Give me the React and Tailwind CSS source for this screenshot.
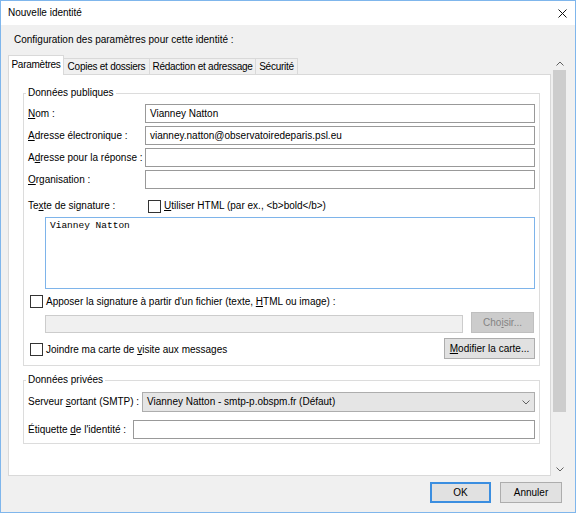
import React from 'react';

function Checkbox() {
  return <div className="w-[13px] h-[13px] border border-[#333333] bg-white shrink-0" />;
}

function Field({ label, value, labelWidth = 'w-[117px]' }) {
  return (
    <div className="flex items-center h-[19px]">
      <div className={`${labelWidth} shrink-0 whitespace-nowrap`}>{label}</div>
      <div className="flex-1 h-[19px] border border-[#999999] bg-white flex items-center pl-[4px] whitespace-nowrap">
        {value}
      </div>
    </div>
  );
}

function Chevron({ up }) {
  return (
    <svg width="8" height="5" viewBox="0 0 8 5">
      <path
        d={up ? 'M0.5 4.5 L4 1 L7.5 4.5' : 'M0.5 0.5 L4 4 L7.5 0.5'}
        fill="none"
        stroke="#606060"
        strokeWidth="1"
      />
    </svg>
  );
}

export default function App() {
  const tabs = [
    { name: 'Copies et dossiers', w: 'w-[86px]' },
    { name: 'Rédaction et adressage', w: 'w-[106px]' },
    { name: 'Sécurité', w: 'w-[42px]' },
  ];

  return (
    <div className="w-[576px] h-[513px] border border-[#7fb6ec] bg-[#f0f0f0] flex flex-col text-[10px] leading-[14px] text-black font-['Liberation_Sans',Arial,sans-serif]">
      {/* title bar */}
      <div className="h-[24px] bg-white flex items-center justify-between pl-[7px] pr-[8px] shrink-0">
        <span>Nouvelle identité</span>
        <svg width="9" height="9" viewBox="0 0 9 9">
          <path d="M0.5 0.5 L8.5 8.5 M8.5 0.5 L0.5 8.5" stroke="#111" strokeWidth="1" />
        </svg>
      </div>

      <div className="pt-[8px] pl-[13px]">Configuration des paramètres pour cette identité :</div>

      <div className="flex items-start mt-[8px] ml-[7px]">
        <div className="w-[543px] flex flex-col">
          {/* tabs */}
          <div className="flex items-end h-[19px] tracking-[-0.25px]">
            <div className="relative z-10 w-[56px] h-[20px] -mb-px bg-white border-t border-l border-r border-[#d9d9d9] flex items-start justify-center pt-[2px] whitespace-nowrap">
              Paramètres
            </div>
            {tabs.map((t) => (
              <div
                key={t.name}
                className={`${t.w} h-[16px] border-t border-r border-[#d9d9d9] bg-[#f0f0f0] flex items-center justify-center whitespace-nowrap`}
              >
                {t.name}
              </div>
            ))}
          </div>

          {/* panel */}
          <div className="h-[402px] bg-white border border-[#d9d9d9] pt-[11px] pl-[14px]">
            <fieldset className="w-[517px] border border-[#dcdcdc] px-[4px] pt-[4px] pb-[6px]">
              <legend className="-ml-[2px] px-[2px] leading-[14px]">Données publiques</legend>
              <div className="flex flex-col gap-[3px]">
                <Field label={<><span className="underline">N</span>om :</>} value="Vianney Natton" />
                <Field
                  label={<><span className="underline">A</span>dresse électronique :</>}
                  value="vianney.natton@observatoiredeparis.psl.eu"
                />
                <Field label={<>A<span className="underline">d</span>resse pour la réponse :</>} value="" />
                <Field label={<><span className="underline">O</span>rganisation :</>} value="" />
              </div>

              <div className="flex items-center h-[14px] mt-[10px]">
                <div className="w-[117px] shrink-0">
                  Te<span className="underline">x</span>te de signature :
                </div>
                <div className="ml-[3px]">
                  <Checkbox />
                </div>
                <span className="ml-[3px] whitespace-nowrap">
                  <span className="underline">U</span>tiliser HTML (par ex., &lt;b&gt;bold&lt;/b&gt;)
                </span>
              </div>

              <div className="ml-[17px] mt-[4px] h-[72px] border border-[#7eb4ea] bg-white pl-[4px] pt-[2px] font-['Liberation_Mono','DejaVu_Sans_Mono',monospace] text-[9.5px] leading-[12px]">
                Vianney Natton
              </div>

              <div className="flex items-center h-[13px] mt-[6px] pl-[2px] gap-[3px]">
                <Checkbox />
                <span className="whitespace-nowrap">
                  Apposer la signature à partir d'un fichier (texte, <span className="underline">H</span>TML ou image) :
                </span>
              </div>

              <div className="flex items-end mt-[4px] ml-[17px] gap-[8px]">
                <div className="w-[418px] h-[18px] border border-[#cccccc] bg-[#f0f0f0]" />
                <div className="w-[63px] h-[21px] border border-[#bfbfbf] bg-[#cccccc] text-[#838383] flex items-center justify-center">
                  Cho<span className="underline">i</span>sir...
                </div>
              </div>

              <div className="flex items-center justify-between h-[21px] mt-[5px]">
                <div className="flex items-center gap-[3px] pl-[2px] mt-[2px]">
                  <Checkbox />
                  <span className="whitespace-nowrap">
                    Joindre ma carte de <span className="underline">v</span>isite aux messages
                  </span>
                </div>
                <div className="w-[91px] h-[21px] border border-[#adadad] bg-[#e1e1e1] flex items-center justify-center whitespace-nowrap">
                  <span className="underline">M</span>odifier la carte...
                </div>
              </div>
            </fieldset>

            <fieldset className="w-[517px] mt-[7px] border border-[#dcdcdc] px-[4px] pt-[5px] pb-[4px]">
              <legend className="-ml-[2px] px-[2px] leading-[14px]">Données privées</legend>
              <div className="flex items-center h-[20px]">
                <div className="w-[114px] shrink-0 whitespace-nowrap">
                  Serveur <span className="underline">s</span>ortant (SMTP) :
                </div>
                <div className="flex-1 h-[20px] border border-[#adadad] bg-[#e5e5e5] flex items-center justify-between pl-[4px] pr-[4px]">
                  <span className="whitespace-nowrap">Vianney Natton - smtp-p.obspm.fr (Défaut)</span>
                  <Chevron />
                </div>
              </div>
              <div className="mt-[8px]">
                <Field
                  labelWidth="w-[105px]"
                  label={<>Étiquette <span className="underline">d</span>e l'identité :</>}
                  value=""
                />
              </div>
            </fieldset>
          </div>
        </div>

        {/* scrollbar */}
        <div className="ml-[2px] mt-[2px] w-[13px] h-[419px] bg-[#f0f0f0] flex flex-col">
          <div className="h-[13px] flex items-center justify-center">
            <Chevron up />
          </div>
          <div className="h-[342px] bg-[#cdcdcd]" />
          <div className="flex-1" />
          <div className="h-[13px] flex items-center justify-center">
            <Chevron />
          </div>
        </div>
      </div>

      {/* buttons */}
      <div className="flex justify-end gap-[9px] mt-[6px] pr-[13px]">
        <div className="w-[61px] h-[21px] border-2 border-[#3b8ee0] bg-[#e1e1e1] flex items-center justify-center">
          OK
        </div>
        <div className="w-[62px] h-[21px] border border-[#adadad] bg-[#e1e1e1] flex items-center justify-center">
          Annuler
        </div>
      </div>
    </div>
  );
}
